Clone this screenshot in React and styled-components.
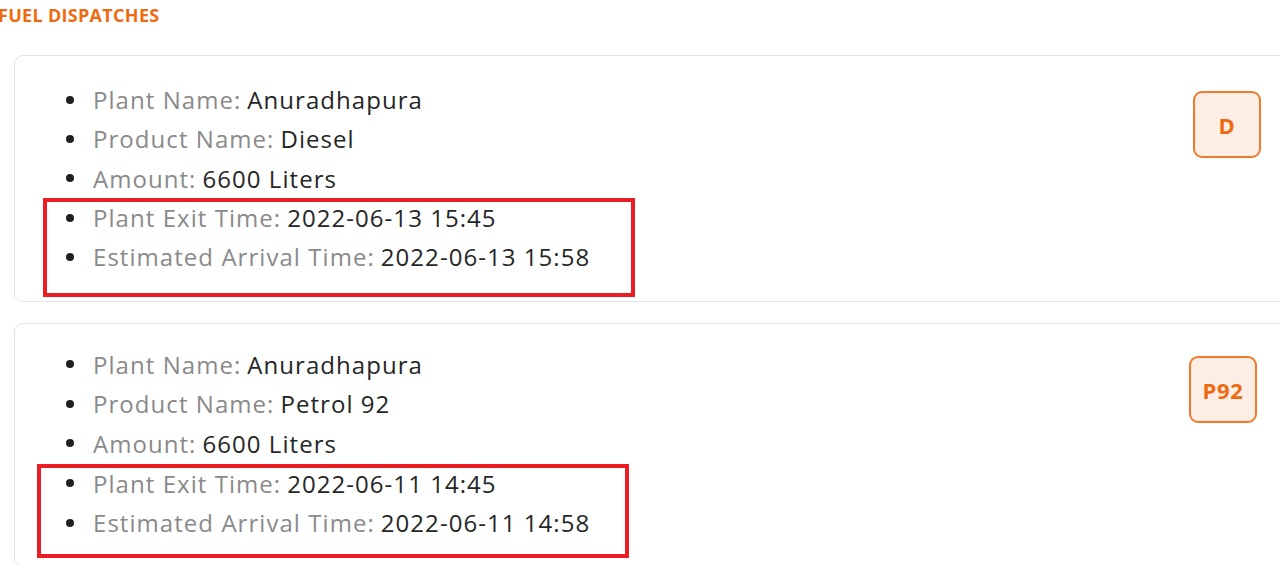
import React from "react";
import styled, { createGlobalStyle } from "styled-components";

const Global = createGlobalStyle`
  html, body { margin: 0; padding: 0; overflow: hidden; background: #fff; }
  body { font-family: "Open Sans", "Noto Sans", sans-serif; }
`;

const Page = styled.div`
  width: 1330px;
  padding-top: 4px;
`;

const Title = styled.h2`
  margin: 0 0 29px -2px;
  font-family: "Open Sans", sans-serif;
  font-weight: 700;
  font-size: 18px;
  line-height: 22px;
  color: #ee6a10;
  letter-spacing: 0.3px;
`;

const Card = styled.section`
  position: relative;
  margin: 0 0 21px 14px;
  border: 1px solid #e4e4e4;
  border-radius: 9px;
  padding: ${(p) => p.$padTop}px 68px ${(p) => p.$padBottom}px 0;
  display: flex;
  align-items: flex-start;
`;

const List = styled.ul`
  flex: 1;
  list-style: none;
  margin: 0;
  padding: 0 0 0 51px;
`;

const Item = styled.li`
  display: flex;
  align-items: center;
  height: ${(p) => p.$h}px;
  font-size: 24px;
  letter-spacing: 1.05px;
  white-space: nowrap;
  &::before {
    content: "";
    width: 8px;
    height: 8px;
    border-radius: 50%;
    background: #1f1f1f;
    margin-right: 19px;
    flex: none;
  }
`;

const Label = styled.span`
  color: #8a8a8a;
  margin-right: 6px;
`;

const Value = styled.span`
  color: #262626;
`;

const Badge = styled.div`
  margin-top: ${(p) => p.$top}px;
  margin-right: ${(p) => p.$right}px;
  width: 64px;
  height: 63px;
  border: 2px solid #f07a2a;
  border-radius: 9px;
  background: #fdeee5;
  color: #ee6a10;
  font-family: "Open Sans", sans-serif;
  font-weight: 700;
  font-size: 22px;
  letter-spacing: 0.6px;
  display: flex;
  align-items: center;
  justify-content: center;
  flex: none;
`;

const Highlight = styled.div`
  position: absolute;
  left: ${(p) => p.$x}px;
  top: ${(p) => p.$y}px;
  width: ${(p) => p.$w}px;
  height: ${(p) => p.$h}px;
  box-sizing: border-box;
  border: 4px solid #ec1c24;
  pointer-events: none;
`;

const dispatches = [
  {
    product: "Diesel",
    code: "D",
    exit: "2022-06-13 15:45",
    arrival: "2022-06-13 15:58",
    padTop: 24,
    padBottom: 25,
    rowH: 39.3,
    badge: { top: 11, right: 0 },
    box: { x: 28, y: 142, w: 592, h: 99 },
  },
  {
    product: "Petrol 92",
    code: "P92",
    exit: "2022-06-11 14:45",
    arrival: "2022-06-11 14:58",
    padTop: 20,
    padBottom: 23,
    rowH: 39.6,
    badge: { top: 12, right: 4 },
    box: { x: 22, y: 140, w: 592, h: 94 },
  },
];

export default function App() {
  return (
    <>
      <Global />
      <Page>
        <Title>FUEL DISPATCHES</Title>
        {dispatches.map((d) => {
          const rows = [
            ["Plant Name:", "Anuradhapura"],
            ["Product Name:", d.product],
            ["Amount:", "6600 Liters"],
            ["Plant Exit Time:", d.exit],
            ["Estimated Arrival Time:", d.arrival],
          ];
          return (
            <Card key={d.code} $padTop={d.padTop} $padBottom={d.padBottom}>
              <List>
                {rows.map(([l, v]) => (
                  <Item key={l} $h={d.rowH}>
                    <Label>{l}</Label>
                    <Value>{v}</Value>
                  </Item>
                ))}
              </List>
              <Badge $top={d.badge.top} $right={d.badge.right}>
                {d.code}
              </Badge>
              <Highlight $x={d.box.x} $y={d.box.y} $w={d.box.w} $h={d.box.h} />
            </Card>
          );
        })}
      </Page>
    </>
  );
}
